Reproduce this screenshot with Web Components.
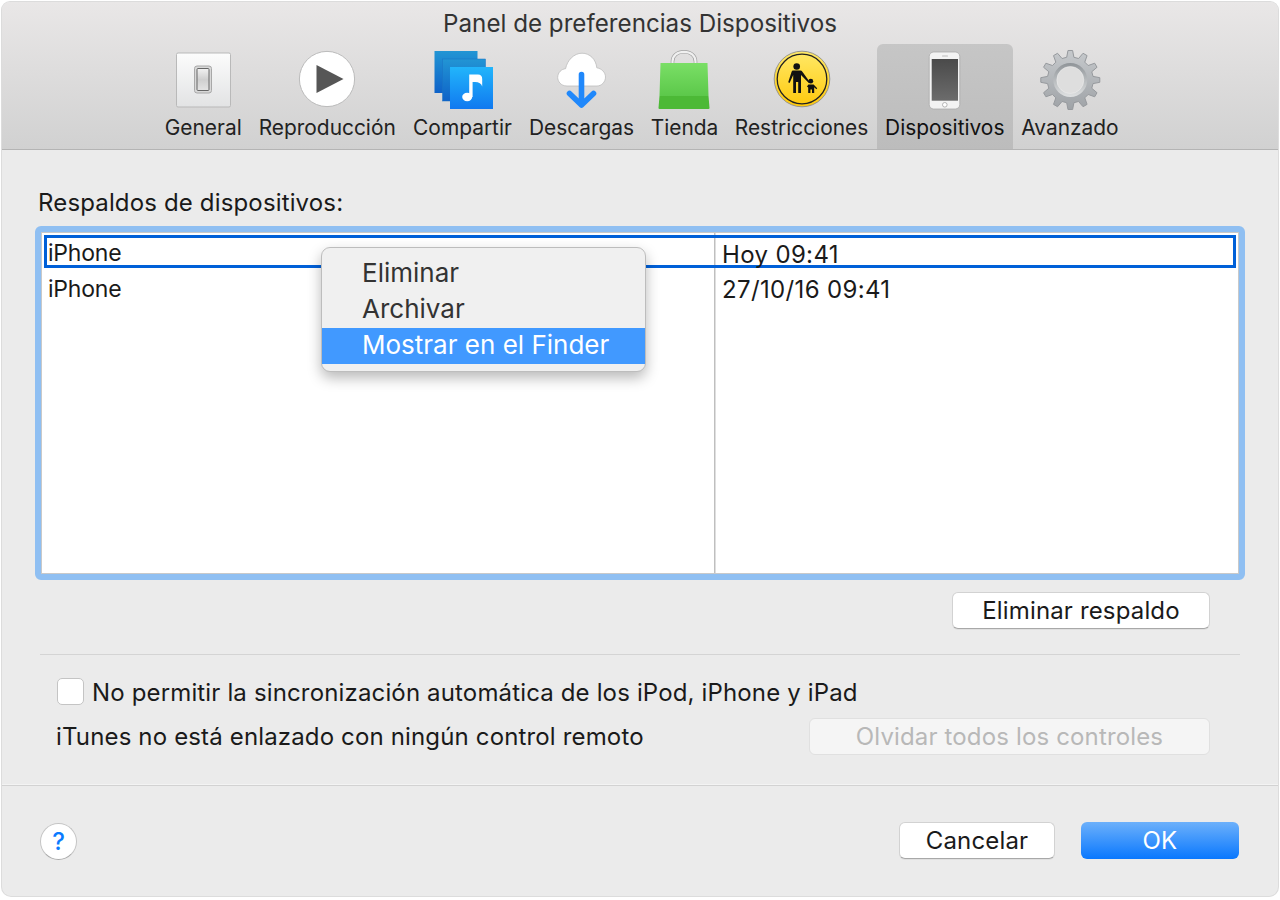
<!DOCTYPE html>
<html lang="es">
<head>
<meta charset="utf-8">
<title>Panel de preferencias Dispositivos</title>
<style>
  html, body { margin: 0; background: #fff; }
  body { font-family: Inter, "Liberation Sans", sans-serif; color: #1c1c1c; }
</style>
</head>
<body>
<prefs-window>
  <prefs-toolbar slot="toolbar" title="Panel de preferencias Dispositivos">
    <toolbar-item icon="general" width="93.5">General</toolbar-item>
    <toolbar-item icon="play" width="154.5">Reproducción</toolbar-item>
    <toolbar-item icon="share" width="116">Compartir</toolbar-item>
    <toolbar-item icon="download" width="122">Descargas</toolbar-item>
    <toolbar-item icon="store" width="84">Tienda</toolbar-item>
    <toolbar-item icon="parental" width="150">Restricciones</toolbar-item>
    <toolbar-item icon="device" width="136.5" active>Dispositivos</toolbar-item>
    <toolbar-item icon="gear" width="114">Avanzado</toolbar-item>
  </prefs-toolbar>

  <field-label>Respaldos de dispositivos:</field-label>
  <backup-table>
    <backup-row selected><span>iPhone</span><span slot="date">Hoy 09:41</span></backup-row>
    <backup-row><span>iPhone</span><span slot="date">27/10/16 09:41</span></backup-row>
    <context-menu slot="menu">
      <menu-item>Eliminar</menu-item>
      <menu-item>Archivar</menu-item>
      <menu-item highlighted>Mostrar en el Finder</menu-item>
    </context-menu>
  </backup-table>
  <button-row><mac-button width="258">Eliminar respaldo</mac-button></button-row>
  <hr-line></hr-line>
  <mac-checkbox>No permitir la sincronización automática de los iPod, iPhone y iPad</mac-checkbox>
  <remote-row>
    <span>iTunes no está enlazado con ningún control remoto</span>
    <mac-button slot="action" width="401" disabled>Olvidar todos los controles</mac-button>
  </remote-row>

  <help-button slot="help"></help-button>
  <mac-button slot="actions" width="156">Cancelar</mac-button>
  <mac-button slot="actions" width="158" primary>OK</mac-button>
</prefs-window>

<script>
// --- Toolbar icons ---
function gearPath(cx, cy, teeth, outer, root) {
  const step = (Math.PI * 2) / teeth;
  const pts = [];
  for (let i = 0; i < teeth; i++) {
    const a = i * step - Math.PI / 2;
    const at = (r, off) => `${(cx + r * Math.cos(a + off)).toFixed(2)} ${(cy + r * Math.sin(a + off)).toFixed(2)}`;
    pts.push(at(root, -step * 0.3), at(outer, -step * 0.15), at(outer, step * 0.15), at(root, step * 0.3));
  }
  return 'M' + pts.join('L') + 'Z';
}

const ICONS = {
  general: `
    <defs><linearGradient id="t" x1="0" y1="0" x2="0" y2="1"><stop offset="0" stop-color="#fcfcfc"/><stop offset="1" stop-color="#e2e3e4"/></linearGradient>
    <linearGradient id="s" x1="0" y1="0" x2="0" y2="1"><stop offset="0" stop-color="#f2f2f2"/><stop offset=".5" stop-color="#cfcfcf"/><stop offset="1" stop-color="#e4e4e4"/></linearGradient></defs>
    <rect x="5.5" y="6" width="54" height="54" rx="1.5" fill="url(#t)" stroke="#b9b9b9"/>
    <rect x="23.5" y="19" width="17" height="27" rx="2.5" fill="#d8d8d8" stroke="#a8a8a8"/>
    <rect x="26" y="21.5" width="12" height="22" rx="1" fill="url(#s)" stroke="#666"/>`,
  play: `
    <circle cx="32" cy="32" r="27.6" fill="#fff" stroke="#b5b5b5" stroke-width=".9"/>
    <path d="M21.5 18 48.5 32 21.5 46Z" fill="#565656"/>`,
  share: `
    <defs><linearGradient id="m" x1="0" y1="0" x2="0" y2="1"><stop offset="0" stop-color="#22b5fb"/><stop offset="1" stop-color="#1079f0"/></linearGradient>
    <linearGradient id="b" x1="0" y1="0" x2="0" y2="1"><stop offset="0" stop-color="#2295d4"/><stop offset="1" stop-color="#0e62c8"/></linearGradient></defs>
    <rect x="3.5" y="4" width="43" height="42" fill="url(#b)"/>
    <rect x="11.5" y="12" width="43" height="42" fill="url(#b)" stroke="#1a72c4" stroke-width=".5"/>
    <rect x="19" y="20" width="43" height="42" fill="url(#m)"/>
    <ellipse cx="36.2" cy="50" rx="5" ry="4.2" fill="#fff"/>
    <path d="M38.2 50V27.5H47Q51.2 27.5 51.2 32V39.5Q50 35 44 35H41.6V50Z" fill="#fff"/>`,
  download: `
    <path d="M17 39C10.5 39 7.7 34 7.7 30.5 7.7 25.5 11.5 22 15.6 21.7 17 13.5 24 6.2 32 6.2 40 6.2 46 12.5 46.8 20.8 51.5 21.5 55.5 25.3 55.5 30 55.5 35 51.5 39 47 39Z" fill="#fff" stroke="#bcbcbc" stroke-width=".8"/>
    <path d="M31.5 27.5V58M19.5 46.5 31.5 58 43.5 46.5" fill="none" stroke="#2088fb" stroke-width="5.6" stroke-linecap="round" stroke-linejoin="round"/>`,
  store: `
    <defs><linearGradient id="g" x1="0" y1="0" x2="0" y2="1"><stop offset="0" stop-color="#7adf66"/><stop offset="1" stop-color="#5cc84a"/></linearGradient></defs>
    <path d="M19.5 18V14.5C19.5 8.5 24.5 4.8 31 4.8S42.5 8.5 42.5 14.5V18" fill="none" stroke="#a0a0a0" stroke-width="3.6"/>
    <path d="M19.5 18V14.5C19.5 8.5 24.5 4.8 31 4.8S42.5 8.5 42.5 14.5V18" fill="none" stroke="#f0f0f0" stroke-width="2.2"/>
    <path d="M7.5 16H54.5L55.5 49H6.5Z" fill="url(#g)"/>
    <path d="M6.5 49H55.5L56.5 61Q56.5 62 55.5 62H6.5Q5.5 62 5.5 61Z" fill="#4cb936"/>`,
  parental: `
    <defs><linearGradient id="y" x1="0" y1="0" x2="0" y2="1"><stop offset="0" stop-color="#ffe968"/><stop offset="1" stop-color="#ffc90c"/></linearGradient></defs>
    <circle cx="32" cy="32" r="27.8" fill="url(#y)" stroke="#8d8d8d" stroke-width=".9"/>
    <circle cx="32" cy="32" r="24.8" fill="none" stroke="#222" stroke-width="1.3"/>
    <circle cx="26.7" cy="19.5" r="3.3" fill="#111"/>
    <path d="M23 23.5H30.5Q31.6 23.5 32.2 24.5L39.8 35 38.8 36 31 28V46H28.2V35H26V46H23.2V28L19.6 36 18.2 35.3 21.6 24.8Q22 23.5 23 23.5Z" fill="#111"/>
    <circle cx="40.8" cy="34.2" r="2.4" fill="#111"/>
    <path d="M38.4 37.5H43.6L47.2 41.3 46.4 42.2 44.2 40.3V46H42V42.5H40.4V46H38.2V40.5L37 39.5Z" fill="#111"/>`,
  device: `
    <defs><linearGradient id="p" x1="0" y1="0" x2="0" y2="1"><stop offset="0" stop-color="#4a4a4a"/><stop offset="1" stop-color="#6c6c6c"/></linearGradient></defs>
    <rect x="16.2" y="5" width="30.6" height="57" rx="4.5" fill="#f3f3f3" stroke="#a9a9a9" stroke-width=".8"/>
    <rect x="18.7" y="12" width="26.3" height="41.7" fill="url(#p)"/>
    <circle cx="31.8" cy="57.8" r="2.3" fill="#fff" stroke="#a5a5a5" stroke-width=".8"/>
    <rect x="29" y="8.5" width="6" height="1" rx=".5" fill="#bbb"/>`,
  gear: `
    <defs><linearGradient id="a" x1="0" y1="0" x2="0" y2="1"><stop offset="0" stop-color="#c6c9cc"/><stop offset="1" stop-color="#9fa3a7"/></linearGradient>
    <linearGradient id="i" x1="0" y1="0" x2="0" y2="1"><stop offset="0" stop-color="#8f9498"/><stop offset="1" stop-color="#dfe1e2"/></linearGradient></defs>
    <path d="${gearPath(32.3, 33, 12, 29.6, 23)}" fill="url(#a)" stroke="#96999d" stroke-width="1" stroke-linejoin="round"/>
    <circle cx="32.3" cy="33" r="17" fill="url(#i)"/>
    <circle cx="32.3" cy="33" r="13.5" fill="#dedede" stroke="#f0f0f0" stroke-width=".5"/>`
};

// --- Base class: shadow root from a css + html pair ---
class ShadowElement extends HTMLElement {
  connectedCallback() {
    if (this.shadowRoot) return;
    this.attachShadow({ mode: 'open' });
    this.shadowRoot.innerHTML = `<style>${this.styles()}</style>${this.markup()}`;
  }
  styles() { return ':host { display: block; }'; }
  markup() { return '<slot></slot>'; }
}

// --- Window frame ---
class PrefsWindow extends ShadowElement {
  styles() {
    return `
      :host { display: flex; flex-direction: column; box-sizing: border-box; width: 1276px; height: 894px; margin: 2px;
        background: #ebebeb; border-radius: 8px 8px 9px 9px; box-shadow: 0 0 0 1px #dcdcdc; overflow: hidden; }
      main { flex: 1; display: flex; flex-direction: column; padding: 40px 38px 0; }
      footer { height: 111px; box-sizing: border-box; border-top: 1px solid #d2d2d2; box-shadow: 0 -1px 0 #f3f3f3;
        padding: 36px 39px 0 38px; display: flex; justify-content: space-between; align-items: flex-start; }
      .actions { display: flex; gap: 26px; }`;
  }
  markup() {
    return `
      <slot name="toolbar"></slot>
      <main><slot></slot></main>
      <footer><slot name="help"></slot><div class="actions"><slot name="actions"></slot></div></footer>`;
  }
}

class PrefsToolbar extends ShadowElement {
  styles() {
    return `
      :host { display: block; height: 148px; box-sizing: border-box; border-bottom: 1px solid #b4b4b4;
        background: linear-gradient(#e9e7e7, #d1d1d1); }
      h1 { margin: 0; height: 42px; line-height: 44px; text-align: center; font-size: 24.2px; font-weight: 400; color: #333; }
      nav { display: flex; padding-left: 154.5px; height: 105px; }`;
  }
  markup() {
    return `<h1>${this.getAttribute('title')}</h1><nav><slot></slot></nav>`;
  }
}

class ToolbarItem extends ShadowElement {
  styles() {
    const w = this.getAttribute('width');
    return `
      :host { display: flex; flex-direction: column; align-items: center; flex: none; width: ${w}px; height: 105px; box-sizing: border-box;
        font-size: 20.9px; color: #222; border-radius: 6px 6px 0 0; }
      :host([active]) { background: linear-gradient(#c6c6c6, #bcbcbc); color: #111; }
      svg { display: block; width: 64px; height: 64px; margin-top: 3px; flex: none; overflow: visible; }
      span { line-height: 26px; margin-top: 4px; white-space: nowrap; }`;
  }
  markup() {
    return `<svg viewBox="0 0 64 64">${ICONS[this.getAttribute('icon')]}</svg><span><slot></slot></span>`;
  }
}

// --- Backups table ---
class FieldLabel extends ShadowElement {
  styles() {
    return `:host { display: block; height: 36px; line-height: 26px; font-size: 24px; letter-spacing: .15px; margin-left: -2px; color: #1a1a1a; }`;
  }
}

class BackupTable extends ShadowElement {
  styles() {
    return `
      :host { display: block; position: relative; box-sizing: border-box; height: 354px; margin: 0 -5px;
        border: 6px solid #8fbff2; border-radius: 6px; }
      .body { box-sizing: border-box; height: 342px; border: 1px solid #c9c9c9; padding: 2px;
        background: linear-gradient(#bfbfbf, #bfbfbf) 672px 0 / 1.5px 100% no-repeat, #fff; }`;
  }
  markup() {
    return '<div class="body"><slot></slot></div><slot name="menu"></slot>';
  }
}

class BackupRow extends ShadowElement {
  styles() {
    return `
      :host { display: grid; grid-template-columns: 668px 1fr; box-sizing: border-box; height: 36px; border: 3px solid transparent;
        border-width: 0 3px; line-height: 36px; color: #1a1a1a; }
      :host([selected]) { height: 33px; border: 3px solid #0060d8; border-bottom-width: 3.5px; line-height: 27px; margin-bottom: 3px; }
      .name { padding-left: 1px; font-size: 23px; letter-spacing: -.2px; margin-top: 2px; }
      .date { padding-left: 7px; font-size: 24px; letter-spacing: .35px; margin-top: 3px; }
      :host(:not([selected])) .name { margin-top: 0; }
      :host(:not([selected])) .date { margin-top: 1px; }`;
  }
  markup() {
    return '<div class="name"><slot></slot></div><div class="date"><slot name="date"></slot></div>';
  }
}

class ContextMenu extends ShadowElement {
  styles() {
    return `
      :host { position: absolute; left: 280px; top: 15px; width: 325px; height: 125px; box-sizing: border-box; padding: 8px 0;
        background: #f0f0f0; border: 1px solid #bdbdbd; border-radius: 9px; box-shadow: 0 6px 14px rgba(0,0,0,.28); }`;
  }
}

class MenuItem extends ShadowElement {
  styles() {
    return `
      :host { display: block; height: 36px; line-height: 34px; padding-left: 40px; font-size: 26px; color: #333; }
      :host([highlighted]) { background: #4199ff; color: #fff; }`;
  }
}

// --- Controls ---
class ButtonRow extends ShadowElement {
  styles() {
    return ':host { display: flex; justify-content: flex-end; padding: 12px 30px 0 0; }';
  }
}

class HrLine extends ShadowElement {
  styles() {
    return ':host { display: block; height: 1px; margin-top: 25px; background: #d4d4d4; }';
  }
}

class MacButton extends ShadowElement {
  styles() {
    return `
      :host { display: block; box-sizing: border-box; width: ${this.getAttribute('width')}px; height: 37px; line-height: 35px;
        text-align: center; font-size: 24px; letter-spacing: .15px; color: #1a1a1a; background: #fff; border-radius: 6px;
        border: 1px solid #d2d2d2; border-bottom-color: #a8a8a8; box-shadow: 0 1px 0 rgba(0,0,0,.05); }
      :host([disabled]) { background: #f5f5f5; color: #b8b8b8; border-color: #e0e0e0; box-shadow: none; }
      :host([primary]) { background: linear-gradient(#6cb0fb, #0a78fe); color: #fff; border: 0; line-height: 38px; box-shadow: none; }`;
  }
}

class MacCheckbox extends ShadowElement {
  styles() {
    return `
      :host { display: flex; align-items: center; gap: 8px; margin: 23px 0 0 17px; height: 27px; font-size: 24px; letter-spacing: .15px; color: #1a1a1a; white-space: nowrap; }
      i { display: block; box-sizing: border-box; width: 27px; height: 27px; background: #fff; border: 1px solid #c4c4c4; border-radius: 5px; }
      span { padding-top: 2px; }`;
  }
  markup() { return '<i></i><span><slot></slot></span>'; }
}

class RemoteRow extends ShadowElement {
  styles() {
    return `
      :host { display: flex; justify-content: space-between; align-items: center; margin-top: 13px; padding: 0 30px 0 16px;
        font-size: 24px; letter-spacing: .15px; line-height: 34px; color: #1a1a1a; white-space: nowrap; }`;
  }
  markup() { return '<div><slot></slot></div><slot name="action"></slot>'; }
}

class HelpButton extends ShadowElement {
  styles() {
    return `
      :host { display: block; box-sizing: border-box; width: 37px; height: 37px; margin-top: 1px; border-radius: 50%;
        background: #fff; border: 1px solid #c4c4c4; border-bottom-color: #aaa; text-align: center; line-height: 35px;
        font-size: 24px; font-weight: 500; color: #0a7bff; }`;
  }
  markup() { return '?'; }
}

customElements.define('prefs-window', PrefsWindow);
customElements.define('prefs-toolbar', PrefsToolbar);
customElements.define('toolbar-item', ToolbarItem);
customElements.define('field-label', FieldLabel);
customElements.define('backup-table', BackupTable);
customElements.define('backup-row', BackupRow);
customElements.define('context-menu', ContextMenu);
customElements.define('menu-item', MenuItem);
customElements.define('button-row', ButtonRow);
customElements.define('hr-line', HrLine);
customElements.define('mac-button', MacButton);
customElements.define('mac-checkbox', MacCheckbox);
customElements.define('remote-row', RemoteRow);
customElements.define('help-button', HelpButton);
</script>
</body>
</html>
